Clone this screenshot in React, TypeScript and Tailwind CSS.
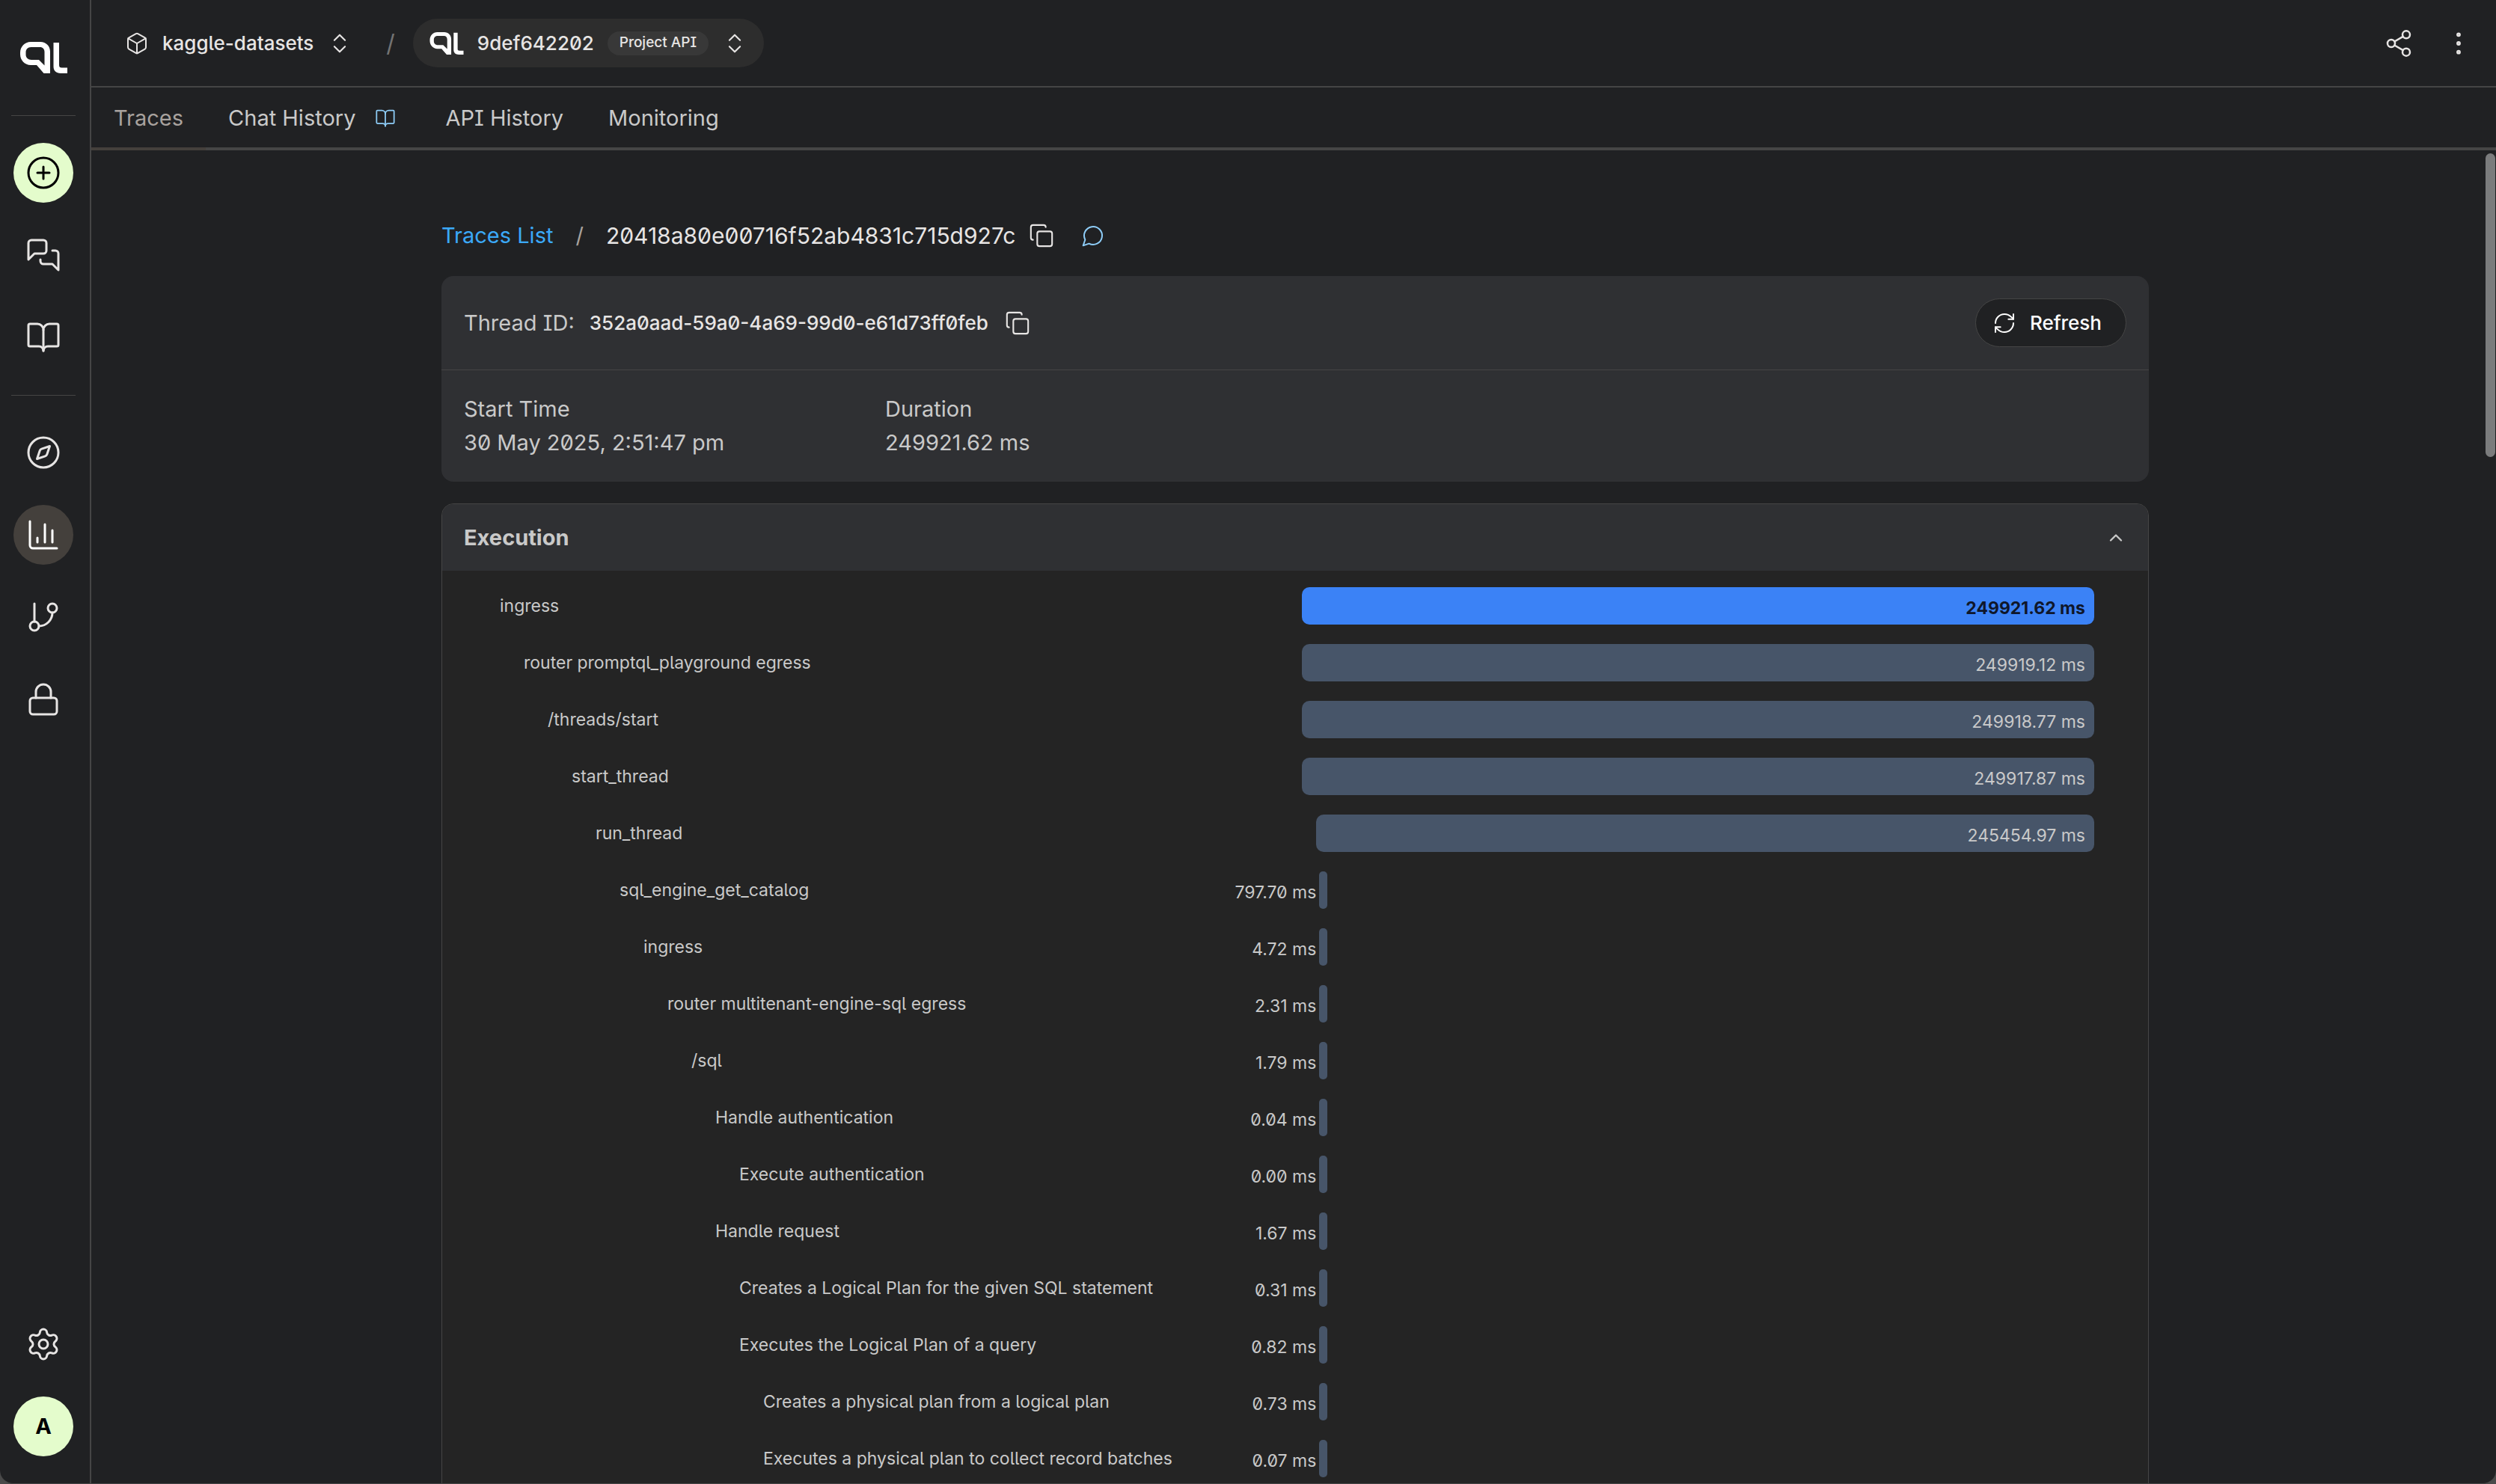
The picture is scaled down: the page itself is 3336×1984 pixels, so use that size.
import React from "react";
import {
  BookOpen,
  Box,
  ChartColumn,
  ChevronUp,
  ChevronsUpDown,
  CirclePlus,
  Compass,
  Copy,
  EllipsisVertical,
  Lock,
  RefreshCw,
  Settings,
  Share2,
} from "lucide-react";

// ------------------ Types ------------------

type Span = {
  name: string;
  depth: number;
  duration: string;
  start: number;
  width: number;
};

// ------------------ Data ------------------

// spans too short to see are drawn as a thin marker
const tail = { start: 1.83, width: 1 };

const spans: Span[] = [
  { name: "ingress", depth: 0, duration: "249921.62 ms", start: 0, width: 100 },
  { name: "router promptql_playground egress", depth: 1, duration: "249919.12 ms", start: 0, width: 100 },
  { name: "/threads/start", depth: 2, duration: "249918.77 ms", start: 0, width: 100 },
  { name: "start_thread", depth: 3, duration: "249917.87 ms", start: 0, width: 100 },
  { name: "run_thread", depth: 4, duration: "245454.97 ms", start: 1.79, width: 98.21 },
  { name: "sql_engine_get_catalog", depth: 5, duration: "797.70 ms", ...tail },
  { name: "ingress", depth: 6, duration: "4.72 ms", ...tail },
  { name: "router multitenant-engine-sql egress", depth: 7, duration: "2.31 ms", ...tail },
  { name: "/sql", depth: 8, duration: "1.79 ms", ...tail },
  { name: "Handle authentication", depth: 9, duration: "0.04 ms", ...tail },
  { name: "Execute authentication", depth: 10, duration: "0.00 ms", ...tail },
  { name: "Handle request", depth: 9, duration: "1.67 ms", ...tail },
  { name: "Creates a Logical Plan for the given SQL statement", depth: 10, duration: "0.31 ms", ...tail },
  { name: "Executes the Logical Plan of a query", depth: 10, duration: "0.82 ms", ...tail },
  { name: "Creates a physical plan from a logical plan", depth: 11, duration: "0.73 ms", ...tail },
  { name: "Executes a physical plan to collect record batches", depth: 11, duration: "0.07 ms", ...tail },
];

const tabs = ["Traces", "Chat History", "API History", "Monitoring"];

// ------------------ Icons ------------------

const Logo = ({ className }: { className?: string }) => (
  <svg viewBox="0 0 63 42" fill="none" className={className} aria-hidden="true">
    <path
      fill="currentColor"
      fillRule="evenodd"
      d="M14 0H27C34.5 0 40 5.5 40 13V42H31.5L22 31H14C6 31 0 24.5 0 16.5V14.5C0 6.5 6 0 14 0ZM14.5 7C10 7 7.5 10 7.5 14V17C7.5 21 10.5 24 15 24H25L32.5 31.5V13.5C32.5 9.5 30 7 26.5 7Z"
    />
    <path fill="currentColor" d="M44.5 1H52V31C52 33.5 53 34.5 55.5 34.5H63V42H54C48 42 44.5 38.5 44.5 33Z" />
  </svg>
);

const StrokeIcon = ({ className, children }: { className?: string; children: React.ReactNode }) => (
  <svg
    viewBox="0 0 24 24"
    fill="none"
    stroke="currentColor"
    strokeWidth={1.5}
    strokeLinecap="round"
    strokeLinejoin="round"
    className={className}
    aria-hidden="true"
  >
    {children}
  </svg>
);

const ChatsIcon = ({ className }: { className?: string }) => (
  <StrokeIcon className={className}>
    <path d="M14 9a2 2 0 0 1-2 2H6l-4 4V4a2 2 0 0 1 2-2h8a2 2 0 0 1 2 2z" />
    <path d="M18 9h2a2 2 0 0 1 2 2v11l-4-4h-6a2 2 0 0 1-2-2v-1" />
  </StrokeIcon>
);

const BranchIcon = ({ className }: { className?: string }) => (
  <StrokeIcon className={className}>
    <path d="M6 3v12" />
    <circle cx="18" cy="6" r="3" />
    <circle cx="6" cy="18" r="3" />
    <path d="M18 9a9 9 0 0 1-9 9" />
  </StrokeIcon>
);

const CommentIcon = ({ className }: { className?: string }) => (
  <StrokeIcon className={className}>
    <path d="M7.9 20A9 9 0 1 0 4 16.1L2 22Z" />
  </StrokeIcon>
);

// ------------------ Components ------------------

interface NavButtonProps {
  label: string;
  className?: string;
  children: React.ReactNode;
}

const NavButton: React.FC<NavButtonProps> = ({ label, className = "text-stone-200", children }) => (
  <button
    type="button"
    aria-label={label}
    className={`flex size-20 items-center justify-center rounded-full ${className}`}
  >
    {children}
  </button>
);

const Sidebar = () => (
  <aside className="flex w-[122px] shrink-0 flex-col items-center border-r-2 border-[#454545] pr-1 pb-9">
    <a href="#home" aria-label="Home" className="mt-14 text-white">
      <Logo className="h-[42px] w-[63px]" />
    </a>
    <hr className="mt-14 w-[86px] border-[#454545]" />
    <nav className="mt-9 flex flex-col gap-[30px]">
      <NavButton label="New chat" className="bg-[#e4fccc] text-black">
        <CirclePlus className="size-12" strokeWidth={1.5} />
      </NavButton>
      <NavButton label="Chats">
        <ChatsIcon className="size-12" />
      </NavButton>
      <NavButton label="Docs">
        <BookOpen className="size-12" strokeWidth={1.5} />
      </NavButton>
    </nav>
    <hr className="mt-[37px] w-[86px] border-[#454545]" />
    <nav className="mt-9 flex flex-col gap-[30px]">
      <NavButton label="Explore">
        <Compass className="size-12" strokeWidth={1.5} />
      </NavButton>
      <NavButton label="Insights" className="bg-[#44403c] text-white">
        <ChartColumn className="size-12" strokeWidth={1.5} />
      </NavButton>
      <NavButton label="Builds">
        <BranchIcon className="size-12" />
      </NavButton>
      <NavButton label="Security">
        <Lock className="size-12" strokeWidth={1.5} />
      </NavButton>
    </nav>
    <div className="mt-auto flex flex-col gap-[30px]">
      <NavButton label="Settings">
        <Settings className="size-12" strokeWidth={1.5} />
      </NavButton>
      <NavButton label="Account" className="bg-[#e4fccc] text-[29px] font-bold text-black">
        A
      </NavButton>
    </div>
  </aside>
);

const TopBar = () => (
  <header className="flex h-[117px] items-center border-b-2 border-[#454545] pr-[30px] pl-[45px] text-[26px] font-medium text-stone-200">
    <button type="button" className="flex items-center gap-[18px]">
      <Box className="size-8" strokeWidth={1.5} />
      <span>kaggle-datasets</span>
      <ChevronsUpDown className="size-[34px]" strokeWidth={1.5} />
    </button>
    <span className="ml-[45px] text-[32px] font-normal text-neutral-500">/</span>
    <button type="button" className="ml-6 flex h-[65px] items-center gap-[18px] rounded-full bg-[#2d2d2d] px-[22px]">
      <Logo className="h-[30px] w-[46px] text-white" />
      <span>9def642202</span>
      <span className="flex h-8 items-center rounded-full bg-[#383838] px-4 text-[19px]">Project API</span>
      <ChevronsUpDown className="size-[34px]" strokeWidth={1.5} />
    </button>
    <div className="ml-auto flex items-center gap-10">
      <button type="button" aria-label="Share">
        <Share2 className="size-10" strokeWidth={1.5} />
      </button>
      <button type="button" aria-label="More options">
        <EllipsisVertical className="size-10" strokeWidth={1.5} />
      </button>
    </div>
  </header>
);

const Tabs = () => (
  <nav className="flex h-[84px] border-b-4 border-[#454545] text-[29px] text-[#c9c9c9]">
    {tabs.map((tab, i) => (
      <a
        key={tab}
        href="#tab"
        className={`-mb-1 flex items-center gap-[26px] border-b-4 px-[30px] pt-0.5 ${i === 0 ? "border-[#44403c] text-[#a8a29e]" : "border-transparent"}`}
      >
        {tab}
        {tab === "Chat History" && <BookOpen className="mr-1.5 size-7 text-[#8ecdf8]" strokeWidth={1.5} />}
      </a>
    ))}
  </nav>
);

const SpanRow = ({ span, root }: { span: Span; root: boolean }) => {
  const isWide = span.width > 20;
  return (
    <li className="flex h-[76px] items-start">
      <span className="w-[1072px] shrink-0 pt-[3px] leading-[44px]" style={{ paddingLeft: span.depth * 32 }}>
        {span.name}
      </span>
      <div className="flex min-w-0 flex-1">
        <div className="relative" style={{ width: `${span.start}%` }}>
          {!isWide && <span className="absolute top-2 right-0 leading-[40px] whitespace-nowrap">{span.duration}</span>}
        </div>
        <div
          className={`flex h-[50px] items-center justify-end ${isWide ? "rounded-[10px] px-3 pt-1.5" : "ml-1 rounded-[5px]"} ${root ? "bg-[#3b82f6] font-bold text-slate-900" : "bg-[#475569]"}`}
          style={{ width: `${span.width}%` }}
        >
          {isWide && span.duration}
        </div>
      </div>
    </li>
  );
};

const App: React.FC = () => {
  return (
    <div className="bg-[#4a4a4a]">
      <div className="flex h-screen overflow-hidden rounded-b-[18px] border-b border-[#454545] bg-[#202123] font-['Inter','Liberation_Sans',sans-serif] text-[#c9c9c9] [font-feature-settings:'ss02','zero']">
        <Sidebar />
        <div className="flex min-w-0 flex-1 flex-col">
          <TopBar />
          <Tabs />
          <main className="relative min-h-0 flex-1 overflow-hidden pl-1">
            <div className="mx-auto mt-[90px] w-full max-w-[2282px]">
              {/* Breadcrumb */}
              <div className="flex h-12 items-center text-[29px]">
                <a href="#traces" className="text-[#3ba9f8]">Traces List</a>
                <span className="mx-[30px] text-[#a8a29e]">/</span>
                <span className="text-[30px] text-stone-200">20418a80e00716f52ab4831c715d927c</span>
                <button type="button" aria-label="Copy trace ID" className="ml-[18px] text-stone-200">
                  <Copy className="size-[34px]" strokeWidth={1.5} />
                </button>
                <button type="button" aria-label="Comment" className="ml-9 text-[#8ecdf8]">
                  <CommentIcon className="size-8" />
                </button>
              </div>

              {/* Thread details */}
              <section className="mt-[30px] rounded-2xl bg-[#2f3033]">
                <div className="flex h-[126px] items-center border-b border-[#454545] px-[30px]">
                  <span className="text-[29px]">Thread ID:</span>
                  <span className="ml-5 text-[26px] font-medium text-stone-200">352a0aad-59a0-4a69-99d0-e61d73ff0feb</span>
                  <button type="button" aria-label="Copy thread ID" className="ml-[22px] text-stone-200">
                    <Copy className="size-[34px]" strokeWidth={1.5} />
                  </button>
                  <button
                    type="button"
                    className="ml-auto flex h-[65px] items-center gap-[18px] rounded-full border border-[#454545] bg-[#202123] pr-8 pl-[22px] text-[26px] font-medium text-white"
                  >
                    <RefreshCw className="size-8" strokeWidth={1.5} />
                    Refresh
                  </button>
                </div>
                <dl className="flex px-[30px] pt-[29px] pb-[30px] text-[29px] leading-[45px]">
                  <div className="w-[563px]">
                    <dt>Start Time</dt>
                    <dd>30 May 2025, 2:51:47 pm</dd>
                  </div>
                  <div>
                    <dt>Duration</dt>
                    <dd>249921.62 ms</dd>
                  </div>
                </dl>
              </section>

              {/* Execution timeline */}
              <section className="mt-[29px] overflow-hidden rounded-2xl border border-[#454545] bg-[#242424]">
                <button
                  type="button"
                  className="flex h-[89px] w-full items-center justify-between bg-[#2f3033] px-[29px] text-[29px] font-bold"
                >
                  Execution
                  <ChevronUp className="size-7" strokeWidth={2} />
                </button>
                <ul className="pt-[22px] pr-[72px] pl-[77px] text-[23px]">
                  {spans.map((span, i) => (
                    <SpanRow key={i} span={span} root={i === 0} />
                  ))}
                </ul>
              </section>
            </div>
            {/* Scroll thumb */}
            <div className="absolute top-1 right-px h-[406px] w-[13px] rounded-full bg-[#7b7c7d]" />
          </main>
        </div>
      </div>
    </div>
  );
};

export default App;
